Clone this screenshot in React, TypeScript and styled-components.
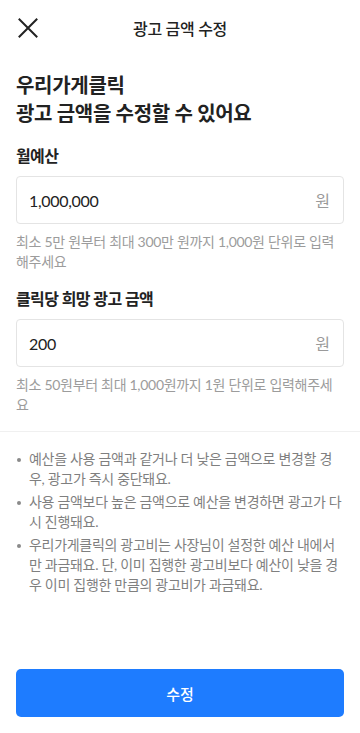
import React from "react";
import styled, { createGlobalStyle } from "styled-components";

const Global = createGlobalStyle`
  html, body { margin: 0; padding: 0; background: #fff; }
  body { font-family: "Lato", "Noto Sans CJK KR", sans-serif; color: #222; -webkit-font-smoothing: antialiased; }
  * { box-sizing: border-box; }
`;

const Page = styled.div`
  min-height: 733px;
  display: flex;
  flex-direction: column;
`;

const Header = styled.header`
  height: 56px;
  display: grid;
  grid-template-columns: 56px 1fr 56px;
  align-items: center;
`;

const CloseButton = styled.button`
  border: 0;
  background: none;
  padding: 0 0 0 18px;
  height: 56px;
  display: flex;
  align-items: center;
  cursor: pointer;
`;

const Title = styled.h1`
  margin: 0;
  text-align: center;
  font-size: 16px;
  font-weight: 500;
  color: #222;
  letter-spacing: -0.3px;
`;

const Content = styled.main`
  padding: 15px 16px 0;
  display: flex;
  flex-direction: column;
`;

const Heading = styled.h2`
  margin: 0 0 17px;
  font-size: 20px;
  line-height: 28px;
  font-weight: 700;
  color: #222;
  letter-spacing: -0.3px;
`;

const Field = styled.section<{ $gap?: number }>`
  display: flex;
  flex-direction: column;
  margin-bottom: ${(p) => p.$gap ?? 0}px;
`;

const Label = styled.label`
  font-size: 16px;
  line-height: 24px;
  font-weight: 600;
  color: #222;
  margin-bottom: 8px;
  letter-spacing: -0.6px;
`;

const InputBox = styled.div`
  height: 48px;
  border: 1px solid #e4e4e4;
  border-radius: 4px;
  display: flex;
  align-items: center;
  padding: 0 13px 0 12px;
`;

const Value = styled.span`
  flex: 1;
  font-size: 16px;
  color: #222;
  letter-spacing: -0.3px;
`;

const Unit = styled.span`
  font-size: 16px;
  color: #9a9a9a;
`;

const Help = styled.p`
  margin: 8px 0 0;
  font-size: 14px;
  line-height: 20px;
  color: #9c9c9c;
  letter-spacing: -0.3px;
`;

const Divider = styled.hr`
  border: 0;
  height: 1px;
  background: #f0f0f0;
  margin: 16px 0 0;
`;

const Notes = styled.ul`
  list-style: none;
  margin: 0;
  padding: 17px 16px 0 16px;
  display: flex;
  flex-direction: column;
  gap: 3px;
`;

const Note = styled.li`
  position: relative;
  padding-left: 13px;
  font-size: 14px;
  line-height: 20px;
  color: #7f7f7f;
  letter-spacing: -0.3px;
  &::before {
    content: "";
    position: absolute;
    left: 1px;
    top: 9px;
    width: 4px;
    height: 4px;
    border-radius: 50%;
    background: #8a8a8a;
  }
`;

const Footer = styled.footer`
  margin-top: auto;
  padding: 16px 16px 16px;
`;

const Submit = styled.button`
  width: 100%;
  height: 48px;
  border: 0;
  border-radius: 5px;
  background: #1e7cff;
  color: #fff;
  font-family: inherit;
  font-size: 15px;
  font-weight: 500;
  cursor: pointer;
`;

export default function App() {
  return (
    <Page>
      <Global />
      <Header>
        <CloseButton aria-label="닫기">
          <svg width="20" height="20" viewBox="0 0 20 20" fill="none">
            <path d="M1.5 1.5L18.5 18.5M18.5 1.5L1.5 18.5" stroke="#222" strokeWidth="2" strokeLinecap="square" />
          </svg>
        </CloseButton>
        <Title>광고 금액 수정</Title>
        <div />
      </Header>
      <Content>
        <Heading>
          우리가게클릭
          <br />
          광고 금액을 수정할 수 있어요
        </Heading>
        <Field $gap={15}>
          <Label>월예산</Label>
          <InputBox>
            <Value>1,000,000</Value>
            <Unit>원</Unit>
          </InputBox>
          <Help>최소 5만 원부터 최대 300만 원까지 1,000원 단위로 입력해주세요</Help>
        </Field>
        <Field>
          <Label>클릭당 희망 광고 금액</Label>
          <InputBox>
            <Value>200</Value>
            <Unit>원</Unit>
          </InputBox>
          <Help>최소 50원부터 최대 1,000원까지 1원 단위로 입력해주세요</Help>
        </Field>
      </Content>
      <Divider />
      <Notes>
        <Note>예산을 사용 금액과 같거나 더 낮은 금액으로 변경할 경우, 광고가 즉시 중단돼요.</Note>
        <Note>사용 금액보다 높은 금액으로 예산을 변경하면 광고가 다시 진행돼요.</Note>
        <Note>우리가게클릭의 광고비는 사장님이 설정한 예산 내에서만 과금돼요. 단, 이미 집행한 광고비보다 예산이 낮을 경우 이미 집행한 만큼의 광고비가 과금돼요.</Note>
      </Notes>
      <Footer>
        <Submit>수정</Submit>
      </Footer>
    </Page>
  );
}
